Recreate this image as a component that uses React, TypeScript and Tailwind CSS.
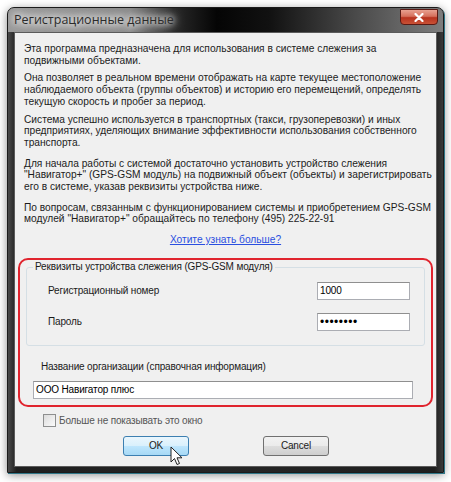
const body = "font-['Liberation_Sans',Arial,sans-serif] text-[10.2px] leading-[11.7px] text-[#1c1c1c] whitespace-nowrap";
const ui = "font-['Liberation_Sans',Arial,sans-serif] text-[10px] tracking-[-0.15px]";

const Cursor = () => (
  <svg width="13" height="21" viewBox="0 0 13 21" className="absolute left-[46px] top-[9px]">
    <path
      d="M1 1 L1 16 L4.5 12.5 L7 18.5 L9.5 17.5 L7 11.8 L12 11.8 Z"
      fill="#fff"
      stroke="#222"
      strokeWidth="1"
      strokeLinejoin="round"
    />
  </svg>
);

const Input = ({ value, className }: { value: string; className: string }) => (
  <div
    className={
      "h-[18px] bg-white border border-[#abadb3] border-t-[#8f8f8f] flex items-center px-[2px] text-black " +
      ui +
      " " +
      className
    }
  >
    {value}
  </div>
);

export default function App() {
  return (
    <div className="w-[451px] h-[482px] bg-white pt-[7px] pl-[7px] overflow-hidden">
      <div className="w-[437px] h-[466px] rounded-t-[7px] border border-[#1b1b1b] shadow-[1px_1px_0_#2f7687,0_2px_10px_rgba(0,0,0,0.45)] bg-[linear-gradient(to_right,#9a9a9a_0%,#8a8a8a_28%,#2a2a2a_38%,#050505_48%,#111_60%,#4a4a4a_80%,#7d7d7d_100%)] flex flex-col overflow-hidden">
        <div className="h-[24px] flex items-start justify-between pl-[6px] pr-[5px] shrink-0">
          <div className="pt-[5px] font-['Open_Sans',sans-serif] text-[12.5px] leading-[14px] text-[#2b2b2b] [text-shadow:0_0_6px_#fff,0_0_10px_#fff,0_0_14px_#fff]">
            Регистрационные данные
          </div>
          <div className="w-[38px] h-[16px] mt-[1px] rounded-b-[4px] border border-[#5a1a14] bg-[linear-gradient(to_bottom,#e8a191_0%,#d6705c_45%,#b8331f_55%,#c95236_100%)] flex items-center justify-center">
            <svg width="10" height="9" viewBox="0 0 10 9">
              <path d="M1.5 1 L8.5 8 M8.5 1 L1.5 8" stroke="#fff" strokeWidth="2.2" strokeLinecap="round" />
            </svg>
          </div>
        </div>
        <div className="flex-1 flex flex-col px-[6px] pb-[5px] bg-[linear-gradient(to_right,#4a4a4a_0%,#1e1e1e_2%,#262626_50%,#1e1e1e_98%,#3a3a3a_100%)]">
          <div className="flex-1 border border-[#5b5b5b] bg-[#f0f0f0] flex flex-col">
            <div className={body + " pl-[9px] pt-[10px]"}>
              <p>
                Эта программа предназначена для использования в системе слежения за
                <br />
                подвижными объектами.
              </p>
              <p className="mt-[6px]">
                Она позволяет в реальном времени отображать на карте текущее местоположение
                <br />
                наблюдаемого объекта (группы объектов) и историю его перемещений, определять
                <br />
                текущую скорость и пробег за период.
              </p>
              <p className="mt-[6px]">
                Система успешно используется в транспортных (такси, грузоперевозки) и иных
                <br />
                предприятиях, уделяющих внимание эффективности использования собственного
                <br />
                транспорта.
              </p>
              <p className="mt-[9px]">
                Для начала работы с системой достаточно установить устройство слежения
                <br />
                "Навигатор+" (GPS-GSM модуль) на подвижный объект (объекты) и зарегистрировать
                <br />
                его в системе, указав реквизиты устройства ниже.
              </p>
              <p className="mt-[9px]">
                По вопросам, связанным с функционированием системы и приобретением GPS-GSM
                <br />
                модулей "Навигатор+" обращайтесь по телефону (495) 225-22-91
              </p>
              <p className="mt-[9px] pr-[9px] text-center text-[#2a4fe0] underline">Хотите узнать больше?</p>
            </div>

            <div className={"mt-[12px] mx-[3px] h-[149px] rounded-[10px] border-2 border-[#e0242e] px-[6px] pt-[6px] text-[#1a1a1a] " + ui}>
              <div className="relative h-[79px] rounded-[3px] border border-[#d5dfe5] mt-[1px]">
                <span className="absolute -top-[8px] left-[6px] bg-[#f0f0f0] px-[2px] leading-[14px]">
                  Реквизиты устройства слежения (GPS-GSM модуля)
                </span>
                <div className="flex items-center justify-between pl-[21px] pr-[14px] pt-[14px]">
                  <span>Регистрационный номер</span>
                  <Input value="1000" className="w-[93px]" />
                </div>
                <div className="flex items-center justify-between pl-[21px] pr-[14px] pt-[13px]">
                  <span>Пароль</span>
                  <Input value="••••••••" className="w-[93px] !text-[12px] !tracking-[0.5px]" />
                </div>
              </div>
              <div className="pl-[15px] pt-[14px] leading-[14px]">Название организации (справочная информация)</div>
              <Input value="ООО Навигатор плюс" className="mt-[7px] ml-[7px] w-[380px]" />
            </div>

            <div className="flex items-center ml-[28px] mt-[6px] gap-[3px]">
              <div className="w-[13px] h-[13px] border border-[#8e8f8f] bg-[linear-gradient(135deg,#dcdcdc,#fbfbfb)]" />
              <span className={ui + " text-[#555]"}>Больше не показывать это окно</span>
            </div>

            <div className={"flex ml-[108px] mt-[8px] gap-[74px] text-[#1a1a1a] " + ui}>
              <div className="relative w-[66px] h-[20px] rounded-[3px] border border-[#3c7fb1] bg-[linear-gradient(to_bottom,#eaf6fd_0%,#d9f0fc_50%,#bee6fd_51%,#a7d9f5_100%)] flex items-center justify-center">
                OK
                <Cursor />
              </div>
              <div className="w-[66px] h-[20px] rounded-[3px] border border-[#707070] bg-[linear-gradient(to_bottom,#f2f2f2_0%,#ebebeb_50%,#dddddd_51%,#cfcfcf_100%)] flex items-center justify-center">
                Cancel
              </div>
            </div>
          </div>
        </div>
      </div>
    </div>
  );
}
